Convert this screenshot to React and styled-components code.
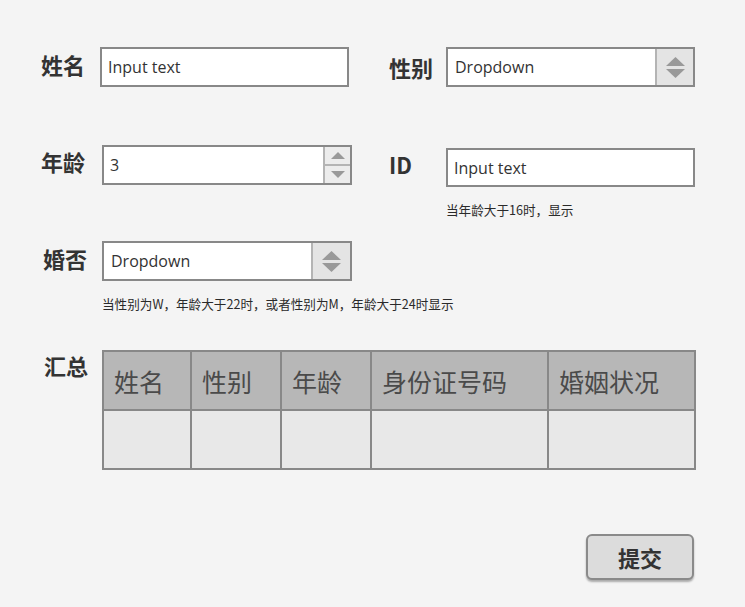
import React from "react";
import styled, { createGlobalStyle } from "styled-components";

const GlobalStyle = createGlobalStyle`
  html, body {
    margin: 0;
    background: #f4f4f4;
  }
  body {
    font-family: "Open Sans", "Noto Sans CJK SC", sans-serif;
    color: #333;
  }
`;

const Page = styled.div`
  width: 745px;
  height: 607px;
  box-sizing: border-box;
  padding: 47px 0 0 41px;
  overflow: hidden;
`;

const Row = styled.div`
  display: flex;
  align-items: flex-start;
  margin-top: ${(p) => p.$gap || 0}px;
`;

const Column = styled.div`
  width: ${(p) => p.$w}px;
  padding-top: ${(p) => p.$offset || 0}px;
  display: flex;
  flex-direction: column;
`;

const Field = styled.div`
  display: flex;
  align-items: center;
`;

/* $lift raises the label a few pixels above the centre of its box */
const Label = styled.div`
  width: ${(p) => p.$w}px;
  padding-left: ${(p) => p.$indent || 0}px;
  margin-bottom: ${(p) => (p.$lift || 0) * 2}px;
  box-sizing: border-box;
  font-family: "Noto Sans CJK SC", sans-serif;
  font-weight: 700;
  font-size: 22px;
  line-height: 30px;
  color: #333;
  flex-shrink: 0;
`;

const Box = styled.div`
  width: ${(p) => p.$w}px;
  height: ${(p) => p.$h}px;
  box-sizing: border-box;
  border: 2px solid #888;
  background: #fff;
  display: flex;
  align-items: stretch;
`;

const BoxText = styled.div`
  flex: 1;
  display: flex;
  align-items: center;
  padding-left: ${(p) => p.$pad || 6}px;
  font-family: "Open Sans", "Noto Sans CJK SC", sans-serif;
  font-size: 16px;
  color: #333;
`;

const SelectButton = styled.div`
  width: ${(p) => p.$w}px;
  background: #e4e4e4;
  border-left: 2px solid #b4b4b4;
  display: flex;
  flex-direction: column;
  align-items: center;
  justify-content: center;
  gap: 3px;
`;

const Spinner = styled.div`
  width: 25px;
  border-left: 2px solid #b4b4b4;
  display: flex;
  flex-direction: column;
`;

const SpinHalf = styled.div`
  flex: 1;
  background: #ececec;
  display: flex;
  align-items: center;
  justify-content: center;
  & + & {
    border-top: 2px solid #b4b4b4;
  }
`;

const Hint = styled.div`
  margin-top: 15px;
  padding-left: ${(p) => p.$indent || 0}px;
  font-family: "Noto Sans CJK SC", sans-serif;
  font-size: 12.6px;
  line-height: 16px;
  color: #2a2a2a;
  white-space: nowrap;
`;

const Table = styled.table`
  border-collapse: collapse;
  table-layout: fixed;
  width: 592px;
`;

const HeadCell = styled.th`
  height: 57px;
  border: 2px solid #888;
  background: #b7b7b7;
  text-align: left;
  padding: 0 0 0 10px;
  font-family: "Noto Sans CJK SC", sans-serif;
  font-weight: 400;
  font-size: 25px;
  color: #4a4a4a;
`;

const BodyCell = styled.td`
  height: 57px;
  border: 2px solid #888;
  background: #e8e8e8;
  padding: 0;
`;

const Footer = styled.div`
  width: 653px;
  display: flex;
  justify-content: flex-end;
  margin-top: 64px;
`;

const SubmitButton = styled.button`
  width: 108px;
  height: 46px;
  box-sizing: border-box;
  border: 2px solid #8a8a8a;
  border-radius: 6px;
  background: #dcdcdc;
  box-shadow: 0 2px 2px rgba(0, 0, 0, 0.3);
  font-family: "Noto Sans CJK SC", sans-serif;
  font-weight: 700;
  font-size: 22px;
  color: #333;
  cursor: pointer;
`;

const Triangle = ({ dir, w = 19, h = 9, color = "#999" }) => (
  <svg width={w} height={h} viewBox={`0 0 ${w} ${h}`}>
    <polygon
      points={dir === "up" ? `0,${h} ${w / 2},0 ${w},${h}` : `0,0 ${w / 2},${h} ${w},0`}
      fill={color}
    />
  </svg>
);

const Dropdown = ({ w, h, btn }) => (
  <Box $w={w} $h={h}>
    <BoxText $pad={7}>Dropdown</BoxText>
    <SelectButton $w={btn}>
      <Triangle dir="up" />
      <Triangle dir="down" />
    </SelectButton>
  </Box>
);

const columns = [
  { name: "姓名", w: 88 },
  { name: "性别", w: 90 },
  { name: "年龄", w: 90 },
  { name: "身份证号码", w: 177 },
  { name: "婚姻状况", w: 147 },
];

export default function App() {
  return (
    <>
      <GlobalStyle />
      <Page>
        <Row>
          <Column $w={348}>
            <Field>
              <Label $w={59} $lift={3}>姓名</Label>
              <Box $w={249} $h={40}>
                <BoxText>Input text</BoxText>
              </Box>
            </Field>
          </Column>
          <Column $w={306}>
            <Field>
              <Label $w={57}>性别</Label>
              <Dropdown w={249} h={40} btn={36} />
            </Field>
          </Column>
        </Row>

        <Row $gap={58}>
          <Column $w={348}>
            <Field>
              <Label $w={61} $lift={4}>年龄</Label>
              <Box $w={250} $h={40}>
                <BoxText>3</BoxText>
                <Spinner>
                  <SpinHalf>
                    <Triangle dir="up" w={14} h={7} />
                  </SpinHalf>
                  <SpinHalf>
                    <Triangle dir="down" w={14} h={7} />
                  </SpinHalf>
                </Spinner>
              </Box>
            </Field>
          </Column>
          <Column $w={306} $offset={3}>
            <Field>
              <Label $w={57} $lift={4}>ID</Label>
              <Box $w={249} $h={39}>
                <BoxText>Input text</BoxText>
              </Box>
            </Field>
            <Hint $indent={57}>当年龄大于16时，显示</Hint>
          </Column>
        </Row>

        <Row $gap={23}>
          <Column $w={348}>
            <Field>
              <Label $w={61} $indent={2} $lift={3}>婚否</Label>
              <Dropdown w={250} h={40} btn={37} />
            </Field>
            <Hint $indent={61}>当性别为W，年龄大于22时，或者性别为M，年龄大于24时显示</Hint>
          </Column>
        </Row>

        <Row $gap={38}>
          <Label $w={61} $indent={3}>汇总</Label>
          <Table>
            <colgroup>
              {columns.map((c) => (
                <col key={c.name} style={{ width: c.w }} />
              ))}
            </colgroup>
            <thead>
              <tr>
                {columns.map((c) => (
                  <HeadCell key={c.name}>{c.name}</HeadCell>
                ))}
              </tr>
            </thead>
            <tbody>
              <tr>
                {columns.map((c) => (
                  <BodyCell key={c.name} />
                ))}
              </tr>
            </tbody>
          </Table>
        </Row>

        <Footer>
          <SubmitButton>提交</SubmitButton>
        </Footer>
      </Page>
    </>
  );
}
